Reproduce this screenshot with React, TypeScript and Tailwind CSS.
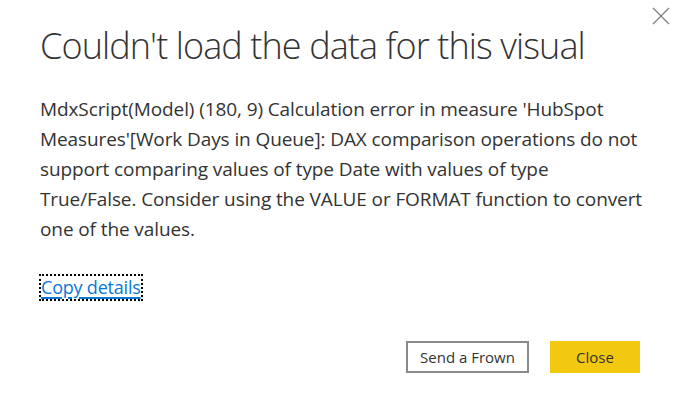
const lines = [
  "MdxScript(Model) (180, 9) Calculation error in measure 'HubSpot",
  "Measures'[Work Days in Queue]: DAX comparison operations do not",
  'support comparing values of type Date with values of type',
  'True/False. Consider using the VALUE or FORMAT function to convert',
  'one of the values.',
];

export default function App() {
  return (
    <div className="w-[673px] h-[410px] bg-white relative font-['Segoe_UI','Open_Sans',sans-serif] text-[#333]">
      <button className="absolute left-[652px] top-[7px] w-[18px] h-[18px] text-[#7a7a7a]">
        <svg width="18" height="18" viewBox="0 0 18 18" fill="none" stroke="currentColor" strokeWidth="1.1">
          <path d="M1 1 L17 17 M17 1 L1 17" />
        </svg>
      </button>

      <div className="flex flex-col pl-[40px] pr-[20px] pt-[22px]">
        <h1 className="text-[36px] font-light leading-[48px] tracking-[-0.9px] text-[#333]">
          Couldn't load the data for this visual
        </h1>

        <p className="mt-[24px] text-[19px] leading-[30px] text-[#333] tracking-[-0.1px] whitespace-nowrap">
          {lines.map((l, i) => (
            <span key={i} className="block">
              {l}
            </span>
          ))}
        </p>

        <div className="mt-[31px]">
          <a className="inline-block outline-2 outline-dotted outline-black -outline-offset-1 px-[1px] text-[18px] leading-[25px] text-[#0a78d7] underline decoration-2 underline-offset-[3px] tracking-[-0.2px]">
            Copy details
          </a>
        </div>

        <div className="flex justify-end gap-[21px] mt-[41px] mr-[13px]">
          <button className="w-[123px] h-[32px] border-2 border-[#8a8a8a] bg-white text-[15px] text-[#333]">
            Send a Frown
          </button>
          <button className="w-[90px] h-[32px] bg-[#f2c811] text-[15px] text-[#333]">
            Close
          </button>
        </div>
      </div>
    </div>
  );
}
